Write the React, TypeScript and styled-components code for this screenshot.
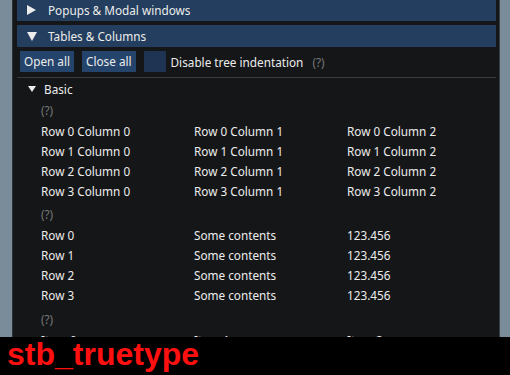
import React from 'react';
import styled, { createGlobalStyle } from 'styled-components';

const Global = createGlobalStyle`
  html, body { margin: 0; padding: 0; background: #7a8b99; overflow: hidden; }
  #root { width: 510px; height: 375px; }
`;

const Page = styled.div`
  display: flex;
  flex-direction: column;
  width: 510px;
  height: 375px;
  font-family: "Noto Sans", "Open Sans", sans-serif;
  font-size: 11.75px;
  color: #ececec;
`;

const Desk = styled.div`
  display: flex;
  height: 337px;
  flex: none;
  overflow: hidden;
  background: #7a8b99;
`;

const Window = styled.div`
  margin-left: 12px;
  width: 488px;
  height: 337px;
  box-sizing: border-box;
  border-left: 1px solid #2e3135;
  border-right: 1px solid #3a3d42;
  background: #151618;
  padding: 0 3px 0 4px;
  overflow: hidden;
  display: flex;
  flex-direction: column;
`;

const Header = styled.div<{ $mt: number }>`
  margin-top: ${p => p.$mt}px;
  height: 22px;
  flex: none;
  background: #233e5e;
  display: flex;
  align-items: center;
  padding-left: 10px;
  line-height: 22px;
  white-space: nowrap;
`;

const ArrowSlot = styled.span<{ $w: number }>`
  width: ${p => p.$w}px;
  flex: none;
  display: flex;
  align-items: center;
`;

const Toolbar = styled.div`
  margin-top: 4px;
  height: 21px;
  flex: none;
  display: flex;
  align-items: center;
  padding-left: 3px;
`;

const Button = styled.div`
  height: 21px;
  line-height: 21px;
  padding: 0 4px;
  background: #25446b;
  margin-right: 8px;
  white-space: nowrap;
`;

const CheckBox = styled.div`
  width: 22px;
  height: 21px;
  background: #1f3353;
`;

const Label = styled.span`
  margin-left: 5px;
  white-space: nowrap;
`;

const Help = styled.span<{ $ml?: number }>`
  color: #767676;
  margin-left: ${p => p.$ml ?? 0}px;
  white-space: nowrap;
`;

const Separator = styled.div`
  margin-top: 5px;
  height: 1px;
  flex: none;
  background: #3a3b40;
`;

const TreeLine = styled.div`
  margin-top: 1px;
  height: 20px;
  line-height: 20px;
  flex: none;
  display: flex;
  align-items: center;
  padding-left: 11px;
`;

const Body = styled.div`
  padding-left: 24px;
  display: flex;
  flex-direction: column;
  flex: none;
`;

const HelpLine = styled.div<{ $mt: number }>`
  margin-top: ${p => p.$mt}px;
  height: 20px;
  line-height: 20px;
`;

const Table = styled.div<{ $mt: number }>`
  margin-top: ${p => p.$mt}px;
  display: grid;
  grid-template-columns: 153px 153px 153px;
  grid-auto-rows: 20px;
  line-height: 20px;
  white-space: nowrap;
`;

const Banner = styled.div`
  height: 38px;
  flex: none;
  background: #000;
  color: #ff1010;
  font-family: "Liberation Sans", Arial, sans-serif;
  font-weight: bold;
  font-size: 32px;
  line-height: 34px;
  padding-left: 7px;
`;

const RightArrow = () => (
  <svg width="10" height="10" viewBox="0 0 10 10"><polygon points="0,0 9,5 0,10" fill="#ececec" /></svg>
);
const DownArrow = ({ w, h }: { w: number; h: number }) => (
  <svg width={w} height={h} viewBox={`0 0 ${w} ${h}`}><polygon points={`0,0 ${w},0 ${w / 2},${h}`} fill="#ececec" /></svg>
);

const rows = [0, 1, 2, 3];

export default function App() {
  return (
    <Page>
      <Global />
      <Desk>
        <Window>
          <Header $mt={-1}>
            <ArrowSlot $w={21}><RightArrow /></ArrowSlot>
            Popups &amp; Modal windows
          </Header>
          <Header $mt={4}>
            <ArrowSlot $w={21}><DownArrow w={10} h={9} /></ArrowSlot>
            Tables &amp; Columns
          </Header>
          <Toolbar>
            <Button>Open all</Button>
            <Button>Close all</Button>
            <CheckBox />
            <Label>Disable tree indentation</Label>
            <Help $ml={9}>(?)</Help>
          </Toolbar>
          <Separator />
          <TreeLine>
            <ArrowSlot $w={16}><DownArrow w={8} h={6} /></ArrowSlot>
            Basic
          </TreeLine>
          <Body>
            <HelpLine $mt={1}><Help>(?)</Help></HelpLine>
            <Table $mt={1}>
              {rows.map(r => [0, 1, 2].map(c => <div key={`${r}-${c}`}>Row {r} Column {c}</div>))}
            </Table>
            <HelpLine $mt={3}><Help>(?)</Help></HelpLine>
            <Table $mt={1}>
              {rows.map(r => [
                <div key={`a${r}`}>Row {r}</div>,
                <div key={`b${r}`}>Some contents</div>,
                <div key={`c${r}`}>123.456</div>,
              ])}
            </Table>
            <HelpLine $mt={4}><Help>(?)</Help></HelpLine>
            <Table $mt={1}>
              {[0, 1, 2].map(i => <div key={i}>Item {i}</div>)}
            </Table>
          </Body>
        </Window>
      </Desk>
      <Banner>stb_truetype</Banner>
    </Page>
  );
}
